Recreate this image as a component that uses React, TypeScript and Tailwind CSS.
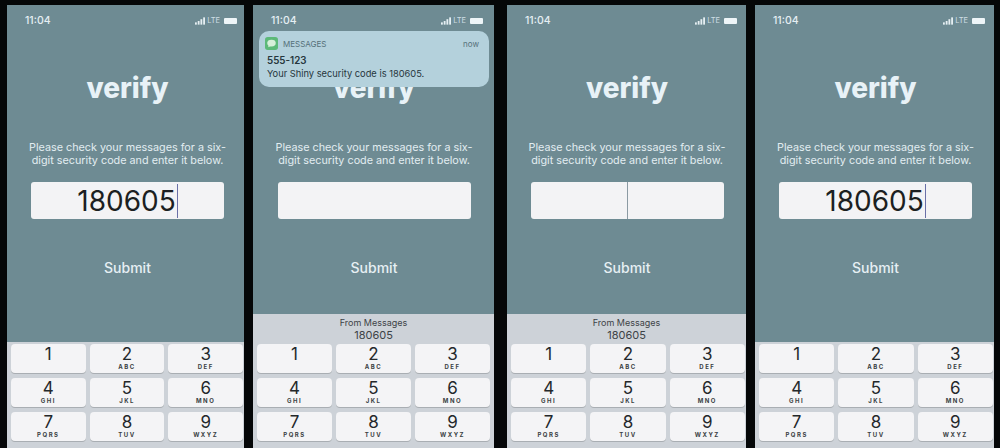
import React from 'react';

interface PhoneProps {
  width: string;
  contentPad: string;
  statusPad: string;
  keysPad: string;
  code?: string;
  caret?: 'text' | 'center';
  notification?: boolean;
  suggestion?: boolean;
}

const keys = [
  { digit: '1', letters: '' },
  { digit: '2', letters: 'ABC' },
  { digit: '3', letters: 'DEF' },
  { digit: '4', letters: 'GHI' },
  { digit: '5', letters: 'JKL' },
  { digit: '6', letters: 'MNO' },
  { digit: '7', letters: 'PQRS' },
  { digit: '8', letters: 'TUV' },
  { digit: '9', letters: 'WXYZ' },
];

function StatusIcons() {
  return (
    <div className="flex items-center gap-[2px]">
      <svg width="10" height="8" viewBox="0 0 11 8" fill="#e6eff3">
        <rect x="0" y="5.5" width="2" height="2.5" />
        <rect x="3" y="4" width="2" height="4" />
        <rect x="6" y="2" width="2" height="6" />
        <rect x="9" y="0" width="2" height="8" />
      </svg>
      <span className="text-[7.5px] leading-none text-[#cfdfe5]">LTE</span>
      <div className="ml-[2px] h-[6px] w-[13px] rounded-[1px] bg-[#eef5f8]" />
    </div>
  );
}

function MessagesIcon() {
  return (
    <svg width="13" height="13" viewBox="0 0 14 14">
      <rect width="14" height="14" rx="3" fill="#5cb978" />
      <ellipse cx="7" cy="6.5" rx="4.6" ry="3.6" fill="#d6efd9" />
      <path d="M4 8.5 L3.4 11 L6.4 9.6 Z" fill="#d6efd9" />
    </svg>
  );
}

function Notification() {
  return (
    <div className="absolute left-[6px] right-[5px] top-[26px] h-[56px] rounded-[10px] bg-[#b4d1dc] pl-[6px] pr-[8px] pt-[6px] text-[#26363d]">
      <div className="flex items-center gap-[5px]">
        <MessagesIcon />
        <span className="text-[8px] text-[#557079]">MESSAGES</span>
        <span className="ml-auto mr-[2px] text-[8px] text-[#557079]">now</span>
      </div>
      <div className="ml-[2px] mt-[4px] text-[9.8px] font-semibold leading-[13px]">555-123</div>
      <div className="ml-[2px] text-[9.3px] leading-[13px]">Your Shiny security code is 180605.</div>
    </div>
  );
}

function Keyboard({ suggestion, keysPad }: { suggestion?: boolean; keysPad: string }) {
  return (
    <div className="mt-auto bg-[#cdd2d8] pb-[7px]">
      {suggestion ? (
        <div className="flex h-[30px] flex-col items-center justify-center text-[#3d4347]">
          <span className="text-[9px] leading-[12px]">From Messages</span>
          <span className="text-[11px] leading-[12px]">180605</span>
        </div>
      ) : (
        <div className="h-[2px]" />
      )}
      <div className={`grid grid-cols-3 gap-x-[4px] gap-y-[5px] pl-[4px] ${keysPad}`}>
        {keys.map((key) => (
          <div
            key={key.digit}
            className="flex h-[29px] flex-col items-center rounded-[4px] bg-[#f4f4f6] text-[#24282b] shadow-[0_1px_0_#a9aeb3]"
          >
            <span className="text-[17px] leading-[20px]">{key.digit}</span>
            <span className="text-[6px] font-bold leading-[6px] tracking-[1.5px] text-[#3a3f43]">
              {key.letters}
            </span>
          </div>
        ))}
      </div>
    </div>
  );
}

function Phone({ width, contentPad, statusPad, keysPad, code, caret, notification, suggestion }: PhoneProps) {
  return (
    <div className={`relative flex h-[443px] shrink-0 flex-col overflow-hidden bg-[#6e8b93] ${width}`}>
      <div className={`flex h-[31px] items-center justify-between pl-[18px] ${statusPad}`}>
        <span className="text-[10.5px] font-medium text-[#e6eff3]">11:04</span>
        <StatusIcons />
      </div>
      <div className={contentPad}>
        <div className="mt-[32px] text-center text-[28px] font-extrabold leading-[40px] text-[#e8f2f7]">
          verify
        </div>
        <div className="mt-[33px] text-center text-[10.8px] leading-[13px] text-[#e2edf1]">
          <div>Please check your messages for a six-</div>
          <div>digit security code and enter it below.</div>
        </div>
        <div className="relative mx-auto mt-[15px] flex h-[37px] w-[193px] items-center justify-center rounded-[3px] bg-[#f3f3f5] text-[#1c1f22]">
          <span className="text-[28px] leading-none">{code}</span>
          {caret === 'text' && <span className="ml-[1px] h-[34px] w-[1px] bg-[#6a70a8]" />}
          {caret === 'center' && <span className="h-[37px] w-[1px] bg-[#8b9aa3]" />}
        </div>
        <div className="mt-[39px] text-center text-[14px] font-medium leading-[20px] text-[#e6eff3]">
          Submit
        </div>
      </div>
      <Keyboard suggestion={suggestion} keysPad={keysPad} />
      {notification && <Notification />}
    </div>
  );
}

export default function App() {
  return (
    <div className="flex h-[448px] w-[1000px] overflow-hidden bg-[#050708] pl-[7px] pt-[5px] font-['Inter',sans-serif]">
      <Phone
        width="w-[237px]"
        contentPad="pl-[4px]"
        statusPad="pr-[7px]"
        keysPad="pr-[1px]"
        code="180605"
        caret="text"
      />
      <div className="ml-[9px]">
        <Phone
          width="w-[241px]"
          contentPad="pl-[1px]"
          statusPad="pr-[11px]"
          keysPad="pr-[4px]"
          notification
          suggestion
        />
      </div>
      <div className="ml-[13px]">
        <Phone
          width="w-[239px]"
          contentPad="pl-[1px]"
          statusPad="pr-[9px]"
          keysPad="pr-[1px]"
          caret="center"
          suggestion
        />
      </div>
      <div className="ml-[9px]">
        <Phone
          width="w-[239px]"
          contentPad="pl-[2px]"
          statusPad="pr-[9px]"
          keysPad="pr-[1px]"
          code="180605"
          caret="text"
        />
      </div>
    </div>
  );
}
